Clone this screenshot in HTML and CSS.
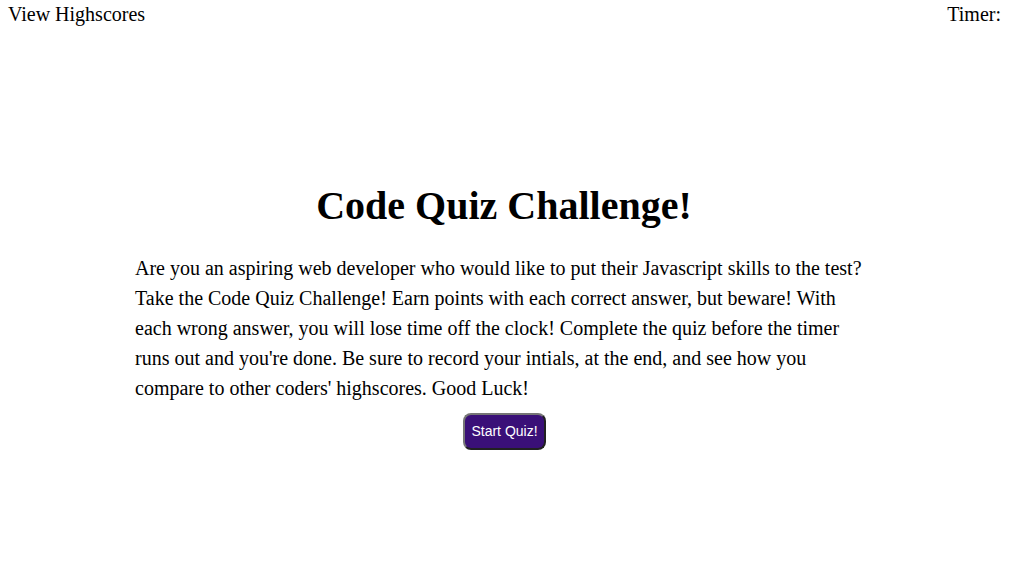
FILE: index.html
```html
<!DOCTYPE html>
<html>
<head>
<meta charset="utf-8">
<link rel="stylesheet" href="styles.css">
</head>
<body>
<header class="top-bar">
  <a class="highscores">View Highscores</a>
  <div class="timer">Timer: <span class="time"></span></div>
</header>
<main class="intro">
  <h1 class="title">Code Quiz Challenge!</h1>
  <p class="description">Are you an aspiring web developer who would like to put their Javascript skills to the test? Take the Code Quiz Challenge! Earn points with each correct answer, but beware! With each wrong answer, you will lose time off the clock! Complete the quiz before the timer runs out and you're done. Be sure to record your intials, at the end, and see how you compare to other coders' highscores. Good Luck!</p>
  <div class="actions">
    <button class="start-btn">Start Quiz!</button>
  </div>
</main>
</body>
</html>
```
FILE: styles.css
```css
html, body {
  margin: 0;
  padding: 0;
  background: #fff;
  color: #000;
  font-family: "Liberation Serif", "Times New Roman", serif;
}

.top-bar {
  display: flex;
  justify-content: space-between;
  align-items: flex-start;
  padding: 3px 11px 0 8px;
  font-size: 20px;
  line-height: 23px;
}

.highscores {
  color: #000;
  text-decoration: none;
}

.intro {
  width: 742px;
  margin: 155px auto 0;
}

.title {
  font-size: 40px;
  font-weight: bold;
  text-align: center;
  margin: 0 0 22px 0;
  padding-right: 4px;
  line-height: 50px;
}

.description {
  font-size: 20px;
  line-height: 30px;
  margin: 0;
}

.actions {
  display: flex;
  justify-content: center;
  margin-top: 10px;
  padding-right: 3px;
}

.start-btn {
  font-family: "Liberation Sans", Arial, sans-serif;
  font-size: 14px;
  color: #fff;
  background: #3a1078;
  border: 2px outset #767676;
  border-radius: 8px;
  padding: 8px 6px;
  line-height: 17px;
  width: 83px;
}
```
